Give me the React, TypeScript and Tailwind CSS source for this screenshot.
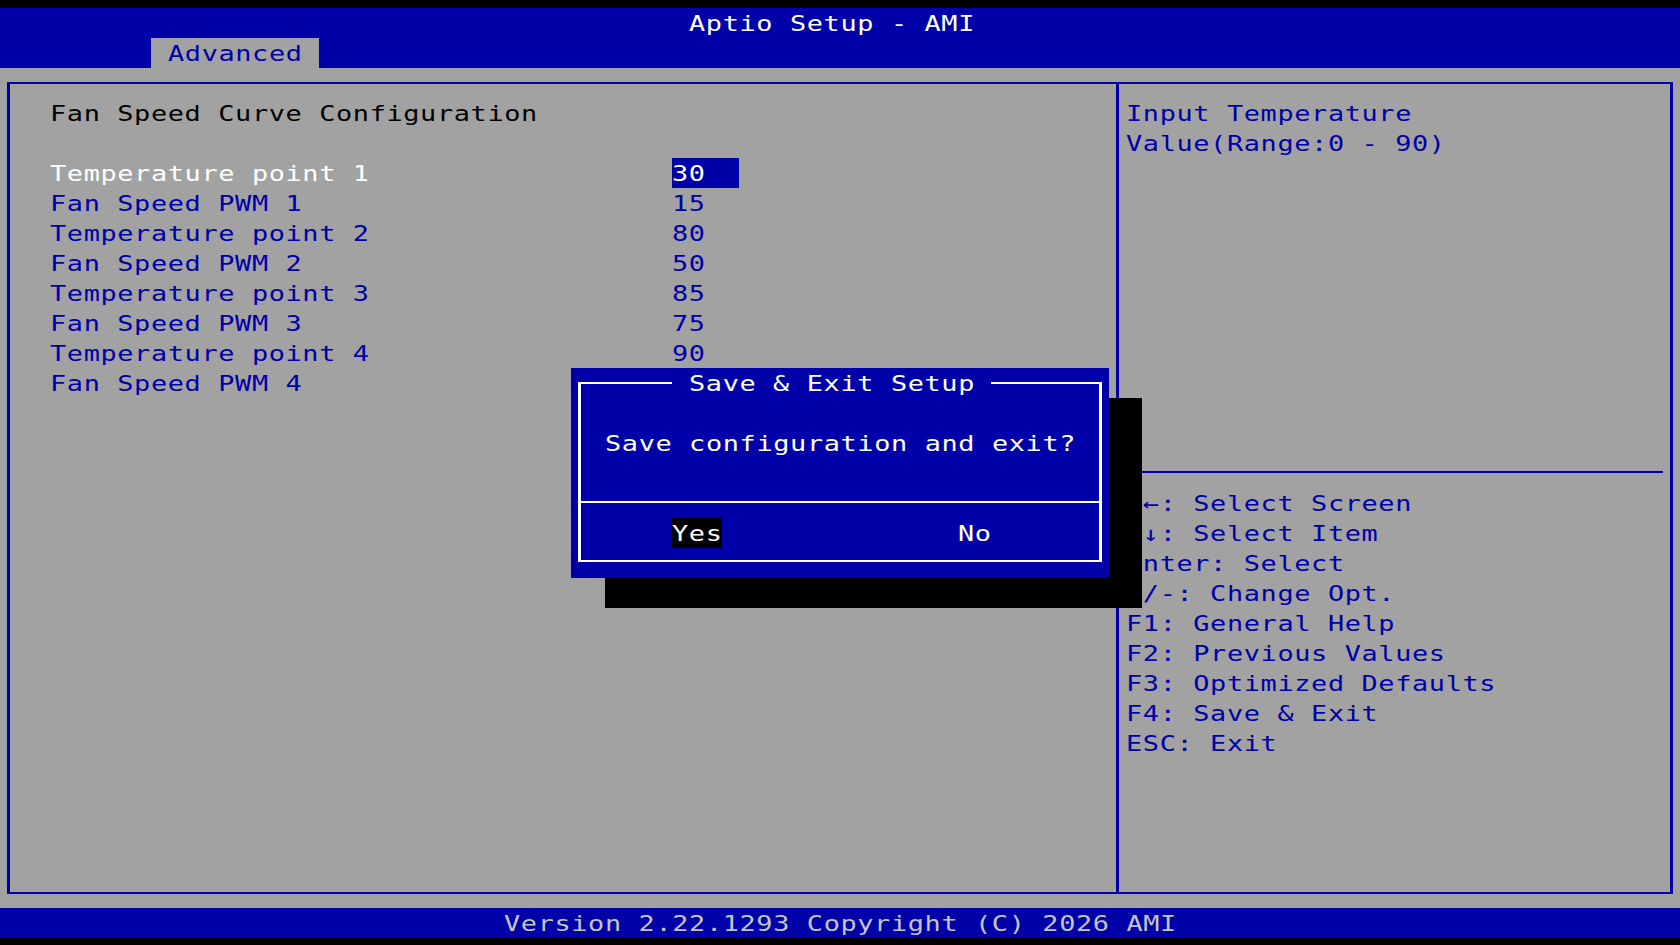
import React from "react";

const T = ({ children, className = "" }: { children: React.ReactNode; className?: string }) => (
  <span className={`inline-block origin-left scale-x-[1.28] translate-y-px whitespace-pre ${className}`}>{children}</span>
);

const items: { label: string; value: string }[] = [
  { label: "Temperature point 1", value: "30" },
  { label: "Fan Speed PWM 1", value: "15" },
  { label: "Temperature point 2", value: "80" },
  { label: "Fan Speed PWM 2", value: "50" },
  { label: "Temperature point 3", value: "85" },
  { label: "Fan Speed PWM 3", value: "75" },
  { label: "Temperature point 4", value: "90" },
  { label: "Fan Speed PWM 4", value: "" },
];

const keys = [
  "\u2192\u2190: Select Screen",
  "\u2191\u2193: Select Item",
  "Enter: Select",
  "+/-: Change Opt.",
  "F1: General Help",
  "F2: Previous Values",
  "F3: Optimized Defaults",
  "F4: Save & Exit",
  "ESC: Exit",
];

export default function App() {
  return (
    <div className="relative w-[1680px] h-[945px] overflow-hidden bg-black flex flex-col font-['DejaVu_Sans_Mono',monospace] text-[21px] leading-[30px] tracking-[0.5px]">
      <div className="h-[8px] shrink-0" />

      {/* Header */}
      <div className="shrink-0 bg-[#0000a8]">
        <div className="h-[30px] pl-[689px] text-white">
          <T>Aptio Setup - AMI</T>
        </div>
        <div className="h-[30px] pl-[151.2px] flex">
          <div className="w-[168px] h-[30px] bg-[#a2a2a2] pl-[16.8px] text-[#0000a8]">
            <T>Advanced</T>
          </div>
        </div>
      </div>

      {/* Main */}
      <div className="shrink-0 h-[840px] bg-[#a2a2a2] py-[14px] px-[7px] flex">
        <div className="flex-1 flex border-y-2 border-x-[3px] border-[#0000a8]">
          {/* Left pane */}
          <div className="w-[1106px] pt-[14px] pl-[40.4px] flex flex-col">
            <div className="h-[30px] text-black">
              <T>Fan Speed Curve Configuration</T>
            </div>
            <div className="h-[30px]" />
            {items.map((it, i) => (
              <div key={it.label} className="h-[30px] flex">
                <div className={`w-[621.6px] ${i === 0 ? "text-white" : "text-[#0000a8]"}`}>
                  <T>{it.label}</T>
                </div>
                {i === 0 ? (
                  <div className="w-[67.2px] h-[30px] bg-[#0000a8] text-white">
                    <T>{it.value}</T>
                  </div>
                ) : it.value ? (
                  <div className="text-[#0000a8]">
                    <T>{it.value}</T>
                  </div>
                ) : null}
              </div>
            ))}
          </div>

          {/* Divider */}
          <div className="w-[3px] bg-[#0000a8]" />

          {/* Right pane */}
          <div className="flex-1 flex flex-col pt-[14px] text-[#0000a8]">
            <div className="pl-[6.6px]">
              <div className="h-[30px]">
                <T>Input Temperature</T>
              </div>
              <div className="h-[30px]">
                <T>Value(Range:0 - 90)</T>
              </div>
            </div>
            <div className="h-[313px]" />
            <div className="h-[2px] mr-[7px] bg-[#0000a8]" />
            <div className="h-[15px]" />
            <div className="pl-[6.6px]">
              {keys.map((k) => (
                <div key={k} className="h-[30px]">
                  <T>{k}</T>
                </div>
              ))}
            </div>
          </div>
        </div>
      </div>

      {/* Footer */}
      <div className="shrink-0 h-[30px] bg-[#0000a8] pl-[504px] text-[#c4c4c4]">
        <T>Version 2.22.1293 Copyright (C) 2026 AMI</T>
      </div>
      <div className="flex-1" />

      {/* Dialog shadow */}
      <div className="absolute left-[604.8px] top-[398px] w-[537.6px] h-[210px] bg-black" />

      {/* Dialog */}
      <div className="absolute left-[571.2px] top-[368px] w-[537.6px] h-[210px] bg-[#0000a8] pt-[14px] px-[7px] pb-[16px] text-white">
        <div className="relative h-full flex flex-col border-y-2 border-x-[3px] border-white">
          <div className="absolute left-[90.8px] top-[-16px] w-[319.2px] h-[30px] bg-[#0000a8] pl-[16.8px]">
            <T>Save &amp; Exit Setup</T>
          </div>
          <div className="h-[44px]" />
          <div className="h-[30px] pl-[23.6px]">
            <T>Save configuration and exit?</T>
          </div>
          <div className="h-[43px]" />
          <div className="h-[2px] bg-white" />
          <div className="h-[15px]" />
          <div className="h-[30px] flex pl-[90.8px]">
            <div className="w-[50.4px] h-[30px] bg-black">
              <T>Yes</T>
            </div>
            <div className="ml-[235.2px]">
              <T>No</T>
            </div>
          </div>
        </div>
      </div>
    </div>
  );
}
